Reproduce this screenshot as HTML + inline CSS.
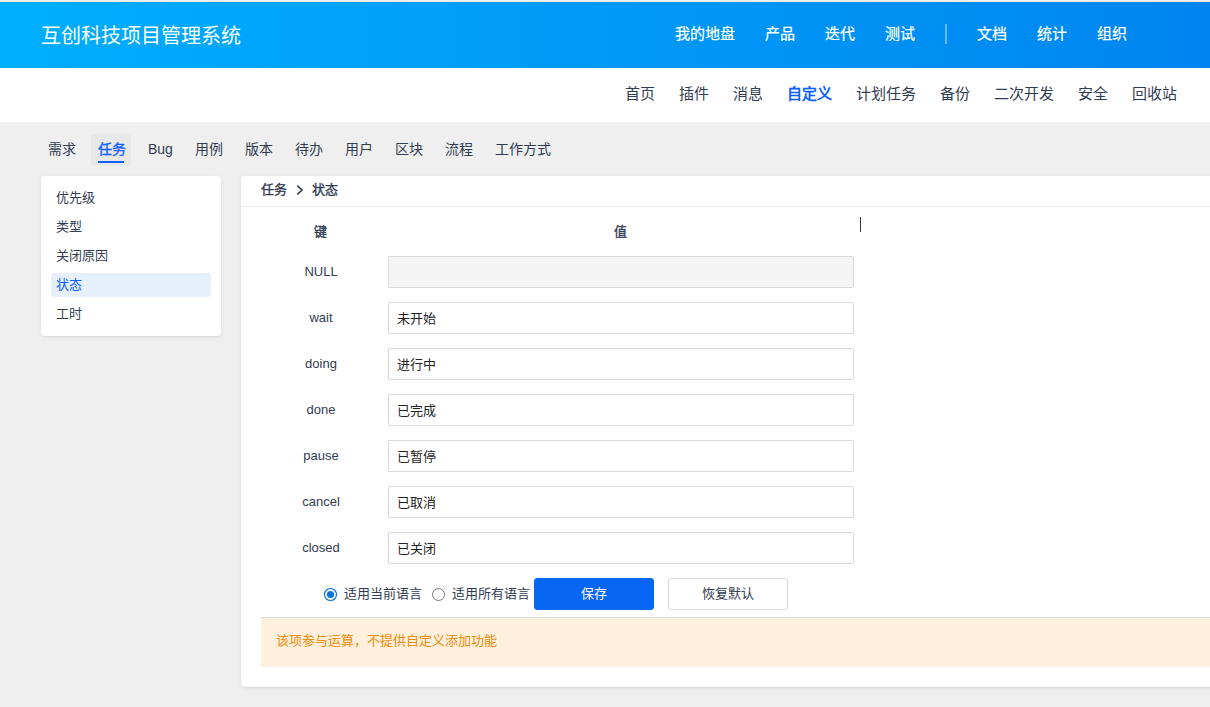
<!DOCTYPE html>
<html lang="zh-CN"><head><meta charset="utf-8">
<style>
*{box-sizing:border-box;margin:0;padding:0}
html,body{width:1210px;height:707px;overflow:hidden}
body{font-family:"Liberation Sans",sans-serif;background:#efefef;color:#313c52;position:relative}
.abs{position:absolute;white-space:nowrap}
#hdr{position:absolute;left:0;top:2px;width:1210px;height:66px;background:linear-gradient(90deg,#00aeff 0%,#0085f0 100%)}
#top{position:absolute;left:0;top:1px;width:1210px;height:1px;background:#f1ebe6}
.title{left:41px;top:23px;font-size:20px;color:#fff;line-height:26px}
.nav{top:24px;font-size:15px;font-weight:normal;-webkit-text-stroke:0.2px #fff;color:#fff;line-height:20px}
.vdiv{position:absolute;left:945px;top:24px;width:2px;height:20px;background:rgba(255,255,255,.4)}
#sub{position:absolute;left:0;top:68px;width:1210px;height:54px;background:#fff}
.sn{top:84px;font-size:15px;color:#313c52;line-height:20px}
.sn.act{color:#0c60ff;font-weight:bold}
.tab{top:139px;font-size:14px;line-height:20px;color:#313c52}
.tab.act{color:#0c60ff;-webkit-text-stroke:0.35px #0c60ff}
#tabbg{position:absolute;left:91px;top:134px;width:40px;height:32px;background:#e8e8e8;border-radius:4px}
#tabline{position:absolute;left:98px;top:161px;width:26px;height:2px;background:#0c60ff}
#lcard{position:absolute;left:41px;top:176px;width:180px;height:160px;background:#fff;border-radius:4px;box-shadow:0 1px 2px rgba(0,0,0,.06),0 1px 6px rgba(0,0,0,.05)}
.li{left:56px;font-size:13px;line-height:20px;color:#313c52}
#lact{position:absolute;left:51px;top:273px;width:160px;height:24px;background:#e6effc;border-radius:4px}
#mcard{position:absolute;left:241px;top:176px;width:980px;height:511px;background:#fff;border-radius:4px;box-shadow:0 1px 2px rgba(0,0,0,.06),0 1px 6px rgba(0,0,0,.05)}
#mline{position:absolute;left:241px;top:206px;width:969px;height:1px;background:#ececec}
.bc{top:180px;font-size:13px;font-weight:normal;-webkit-text-stroke:0.35px #313c52;line-height:20px;color:#313c52}
.th{top:222px;font-size:13px;font-weight:normal;-webkit-text-stroke:0.35px #313c52;line-height:20px;color:#313c52}
.key{left:261px;width:120px;text-align:center;font-size:13px;line-height:20px;color:#313c52}
.inp{position:absolute;left:388px;width:466px;height:32px;border:1px solid #d9d9d9;border-radius:2px;background:#fff;font-size:13px;line-height:32px;padding-left:8px;color:#222}
.inp.dis{background:#f4f4f4}
#cursor{position:absolute;left:860px;top:217px;width:1px;height:15px;background:#333c4c}
.radio{position:absolute;width:13px;height:13px;border-radius:50%}
.rt{top:584px;font-size:13px;line-height:20px;color:#313c52}
.btn{position:absolute;top:578px;width:120px;height:32px;border-radius:3px;font-size:13px;line-height:30px;text-align:center}
#warn{position:absolute;left:261px;top:617px;width:949px;height:50px;background:#fff0de;border-top:1px solid #dedede}
.wt{left:276px;top:631px;font-size:13px;line-height:20px;color:#ea8c08}
</style></head><body>
<div id="top"></div>
<div id="hdr"></div>
<div class="abs title">互创科技项目管理系统</div>
<div class="abs nav" style="left:675px">我的地盘</div>
<div class="abs nav" style="left:765px">产品</div>
<div class="abs nav" style="left:825px">迭代</div>
<div class="abs nav" style="left:885px">测试</div>
<div class="vdiv"></div>
<div class="abs nav" style="left:977px">文档</div>
<div class="abs nav" style="left:1037px">统计</div>
<div class="abs nav" style="left:1097px">组织</div>

<div id="sub"></div>
<div class="abs sn" style="left:625px">首页</div>
<div class="abs sn" style="left:679px">插件</div>
<div class="abs sn" style="left:733px">消息</div>
<div class="abs sn act" style="left:787px">自定义</div>
<div class="abs sn" style="left:856px">计划任务</div>
<div class="abs sn" style="left:940px">备份</div>
<div class="abs sn" style="left:994px">二次开发</div>
<div class="abs sn" style="left:1078px">安全</div>
<div class="abs sn" style="left:1132px">回收站</div>

<div id="tabbg"></div>
<div id="tabline"></div>
<div class="abs tab" style="left:48px">需求</div>
<div class="abs tab act" style="left:98px">任务</div>
<div class="abs tab" style="left:148px">Bug</div>
<div class="abs tab" style="left:195px">用例</div>
<div class="abs tab" style="left:245px">版本</div>
<div class="abs tab" style="left:295px">待办</div>
<div class="abs tab" style="left:345px">用户</div>
<div class="abs tab" style="left:395px">区块</div>
<div class="abs tab" style="left:445px">流程</div>
<div class="abs tab" style="left:495px">工作方式</div>

<div id="lcard"></div>
<div id="lact"></div>
<div class="abs li" style="top:188px">优先级</div>
<div class="abs li" style="top:217px">类型</div>
<div class="abs li" style="top:246px">关闭原因</div>
<div class="abs li" style="top:275px;color:#0c60ff">状态</div>
<div class="abs li" style="top:304px">工时</div>

<div id="mcard"></div>
<div id="mline"></div>
<div class="abs bc" style="left:261px">任务</div>
<svg style="position:absolute;left:290px;top:180px" width="20" height="20"><polyline points="7.3,5.6 12,10 7.3,14.4" fill="none" stroke="#313c52" stroke-width="1.6"/></svg>
<div class="abs bc" style="left:312px">状态</div>
<div id="cursor"></div>
<div class="abs th" style="left:314px">键</div>
<div class="abs th" style="left:614px">值</div>

<div class="abs key" style="top:262px">NULL</div>
<div class="inp dis" style="top:256px"></div>
<div class="abs key" style="top:308px">wait</div>
<div class="inp" style="top:302px">未开始</div>
<div class="abs key" style="top:354px">doing</div>
<div class="inp" style="top:348px">进行中</div>
<div class="abs key" style="top:400px">done</div>
<div class="inp" style="top:394px">已完成</div>
<div class="abs key" style="top:446px">pause</div>
<div class="inp" style="top:440px">已暂停</div>
<div class="abs key" style="top:492px">cancel</div>
<div class="inp" style="top:486px">已取消</div>
<div class="abs key" style="top:538px">closed</div>
<div class="inp" style="top:532px">已关闭</div>

<svg style="position:absolute;left:323px;top:587px" width="15" height="15"><circle cx="7.5" cy="7.5" r="6" fill="#fff" stroke="#0a74da" stroke-width="1.2"/><circle cx="7.5" cy="7.5" r="3.6" fill="#0a74da"/></svg>
<div class="abs rt" style="left:344px">适用当前语言</div>
<svg style="position:absolute;left:431px;top:587px" width="15" height="15"><circle cx="7.5" cy="7.5" r="6" fill="#fff" stroke="#767676" stroke-width="1"/></svg>
<div class="abs rt" style="left:452px">适用所有语言</div>
<div class="btn" style="left:534px;background:#0866f5;color:#fff;border:1px solid #0866f5">保存</div>
<div class="btn" style="left:668px;background:#fff;color:#313c52;border:1px solid #d6dae3">恢复默认</div>

<div id="warn"></div>
<div class="abs wt">该项参与运算，不提供自定义添加功能</div>
</body></html>
